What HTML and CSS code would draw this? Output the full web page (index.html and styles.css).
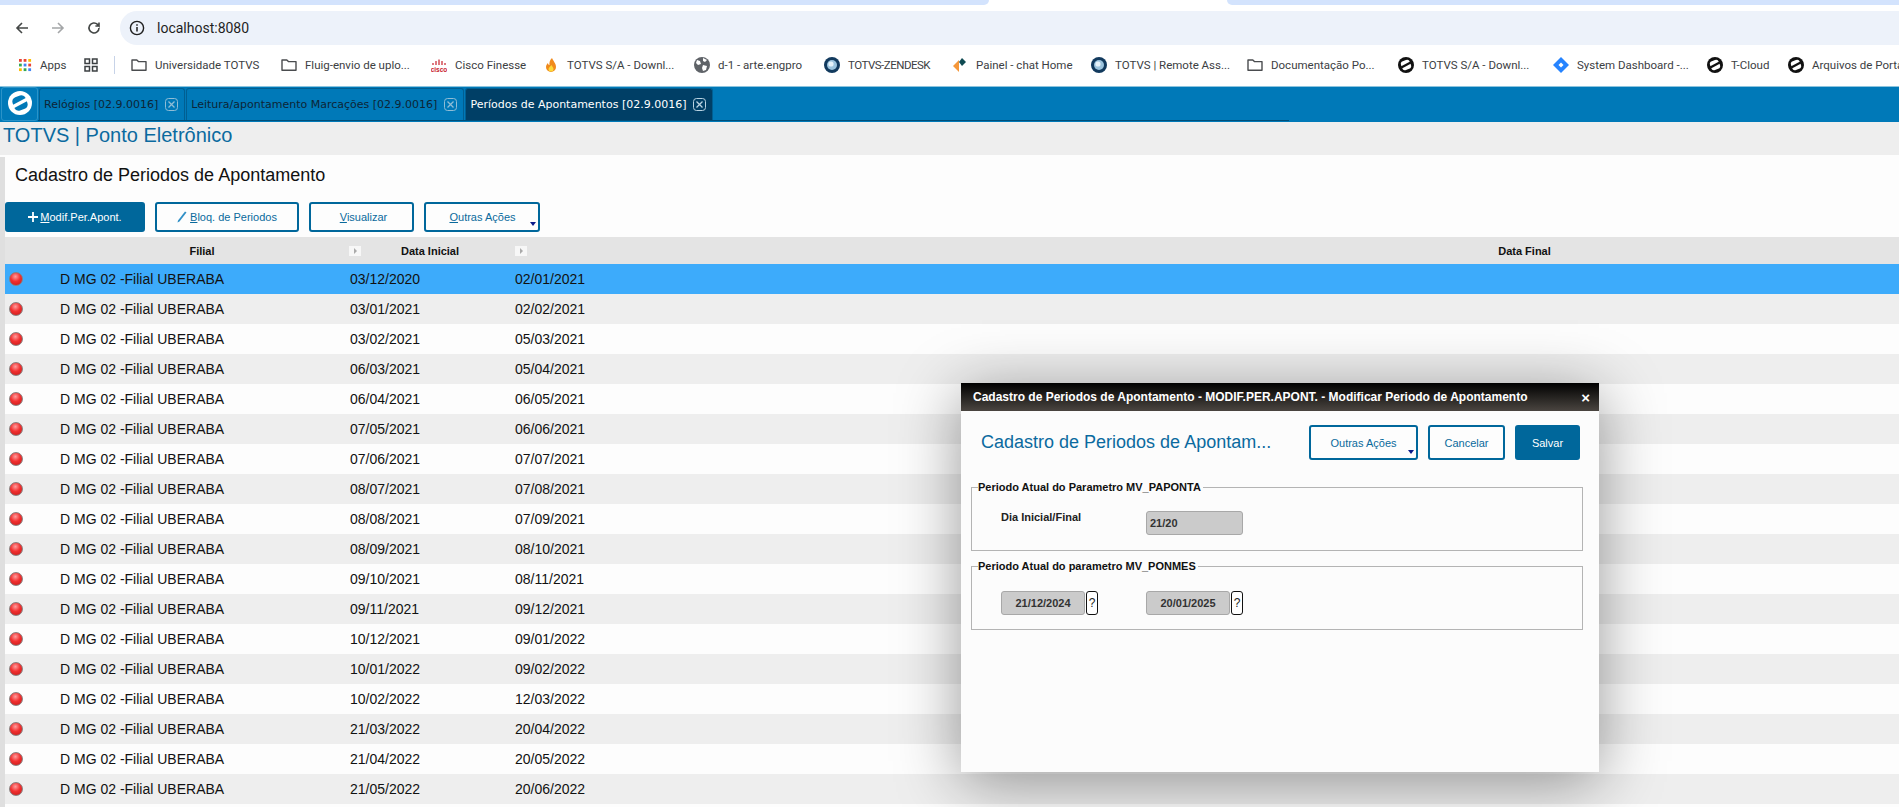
FILE: index.html
```html
<!DOCTYPE html>
<html lang="pt-BR">

<head>
  <meta name="viewport" content="width=device-width, initial-scale=1">
  <meta charset="UTF-8">
  <title>TOTVS | Ponto Eletrônico</title>
  <link rel="stylesheet" href="styles.css">
</head>

<body>
  <svg class="icon-defs" width="0" height="0">
    <symbol id="i-folder" viewBox="0 0 16 16">
      <path d="M1 3h4.800l1.600 1.600H15v8.700H1z" fill="none" stroke="#4a4c4f" stroke-width="1.400" stroke-linejoin="round" />
    </symbol>
    <symbol id="i-logo" viewBox="0 0 24 24">
      <circle cx="12" cy="12" r="12" fill="currentColor" />
      <rect x="5" y="5" width="14" height="14" rx="4.500" fill="var(--logo-bg)" transform="rotate(-20 12 12)" />
      <path d="M5 15.800L19 8.200" stroke="currentColor" stroke-width="3.400" />
    </symbol>
    <symbol id="i-blue-globe" viewBox="0 0 16 16">
      <circle cx="8" cy="8" r="8" fill="#123a5e" />
      <circle cx="8" cy="8" r="5" fill="#9cc4de" />
      <circle cx="7" cy="7" r="2.600" fill="#e6f2fa" />
    </symbol>
    <symbol id="i-tab-close" viewBox="0 0 13 13">
      <rect x="0.500" y="0.500" width="12" height="12" rx="3" fill="none" stroke="currentColor" />
      <path d="M3.500 3.500l6 6M9.500 3.500l-6 6" stroke="currentColor" stroke-width="1.300" />
    </symbol>
  </svg>

  <div class="window-strip">
    <div class="strip-left"></div>
    <div class="strip-tab"></div>
    <div class="strip-right"></div>
  </div>

  <div class="toolbar">
    <div class="nav-btns">
      <svg class="nav-icon" viewBox="0 0 16 16"><path d="M14 8H3M8 3L3 8l5 5" fill="none" stroke="#444746" stroke-width="1.600" /></svg>
      <svg class="nav-icon" viewBox="0 0 16 16"><path d="M2 8h11M8 3l5 5-5 5" fill="none" stroke="#a4a6a8" stroke-width="1.600" /></svg>
      <svg class="nav-icon" viewBox="0 0 16 16"><path d="M13 8a5 5 0 1 1-1.500-3.600L13 6V2.400M13 6H9.400" fill="none" stroke="#444746" stroke-width="1.600" /></svg>
    </div>
    <div class="address-bar">
      <svg class="info-icon" viewBox="0 0 16 16">
        <circle cx="8" cy="8" r="6.600" fill="none" stroke="#1f1f1f" stroke-width="1.400" />
        <path d="M8 7v4.400M8 4.300v1.500" stroke="#1f1f1f" stroke-width="1.500" />
      </svg>
      <span class="address-text">localhost:8080</span>
    </div>
  </div>

  <div class="bookmarks">
    <div class="bm bm-apps">
      <svg class="bm-icon" viewBox="0 0 14 14">
        <rect x="0" y="0" width="3" height="3" fill="#ea4335" /><rect x="5" y="0" width="3" height="3" fill="#ea4335" /><rect x="10" y="0" width="3" height="3" fill="#fbbc04" />
        <rect x="0" y="5" width="3" height="3" fill="#34a853" /><rect x="5" y="5" width="3" height="3" fill="#4285f4" /><rect x="10" y="5" width="3" height="3" fill="#ea4335" />
        <rect x="0" y="10" width="3" height="3" fill="#fbbc04" /><rect x="5" y="10" width="3" height="3" fill="#34a853" /><rect x="10" y="10" width="3" height="3" fill="#4285f4" />
      </svg>
      <span>Apps</span>
    </div>
    <svg class="bm-grid" viewBox="0 0 14 14">
      <path d="M1 1h4.500v4.500H1zM8.500 1H13v4.500H8.500zM1 8.500h4.500V13H1zM8.500 8.500H13V13H8.500z" fill="none" stroke="#3c4043" stroke-width="1.500" />
    </svg>
    <div class="bm-sep"></div>
    <div class="bm"><svg class="bm-icon"><use href="#i-folder" /></svg><span>Universidade TOTVS</span></div>
    <div class="bm"><svg class="bm-icon"><use href="#i-folder" /></svg><span>Fluig-envio de uplo...</span></div>
    <div class="bm">
      <svg class="bm-icon" viewBox="0 0 16 16">
        <path d="M2 6v2M5 4v4M8 2.500v5.500M11 4v4M14 6v2" stroke="#c8202c" stroke-width="1.200" />
        <text x="8" y="14.500" font-size="6.500" font-weight="700" text-anchor="middle" fill="#c8202c" font-family="Liberation Sans, sans-serif">cisco</text>
      </svg>
      <span>Cisco Finesse</span>
    </div>
    <div class="bm">
      <svg class="bm-icon" viewBox="0 0 16 16">
        <path d="M9 1c1 3 4 5 4 9a5 5 0 0 1-10 0c0-2 1-3 2-4 0 1 .5 2 1.500 2C6 5.500 7 3 9 1z" fill="#f08a1c" />
        <path d="M8.500 8c.5 1.500 2 2.500 2 4a2.500 2.500 0 0 1-5 0c0-1.500 2-2.500 3-4z" fill="#fcd93a" />
      </svg>
      <span>TOTVS S/A - Downl...</span>
    </div>
    <div class="bm">
      <svg class="bm-icon" viewBox="0 0 16 16">
        <circle cx="8" cy="8" r="8" fill="#5f6368" />
        <path d="M3 3l3 1 1 3-3 1-2-2zM9 8l4 1-1 4-3 1-1-3zM9 1l4 2-2 2-2-1z" fill="#fff" />
      </svg>
      <span>d-1 - arte.engpro</span>
    </div>
    <div class="bm"><svg class="bm-icon"><use href="#i-blue-globe" /></svg><span class="bm-tight">TOTVS-ZENDESK</span></div>
    <div class="bm">
      <svg class="bm-icon" viewBox="0 0 16 16">
        <path d="M7 3L1 9l6 6z" fill="#f5973a" />
        <path d="M10 1l-3 4 3 4 4-4z" fill="#0f4a52" />
      </svg>
      <span>Painel - chat Home</span>
    </div>
    <div class="bm"><svg class="bm-icon"><use href="#i-blue-globe" /></svg><span>TOTVS | Remote Ass...</span></div>
    <div class="bm"><svg class="bm-icon"><use href="#i-folder" /></svg><span>Documentação Po...</span></div>
    <div class="bm"><svg class="bm-icon bm-logo"><use href="#i-logo" /></svg><span>TOTVS S/A - Downl...</span></div>
    <div class="bm">
      <svg class="bm-icon" viewBox="0 0 16 16">
        <path d="M8 0l8 8-8 8-8-8z" fill="#2684ff" />
        <path d="M8 5.500L10.500 8 8 10.500 5.500 8z" fill="#fff" />
      </svg>
      <span>System Dashboard -...</span>
    </div>
    <div class="bm"><svg class="bm-icon bm-logo"><use href="#i-logo" /></svg><span>T-Cloud</span></div>
    <div class="bm"><svg class="bm-icon bm-logo"><use href="#i-logo" /></svg><span>Arquivos de Portal</span></div>
  </div>

  <div class="tabbar">
    <div class="tab-logo"><svg class="tab-logo-icon"><use href="#i-logo" /></svg></div>
    <div class="tabs">
      <div class="tab">Relógios [02.9.0016]<svg class="tab-x"><use href="#i-tab-close" /></svg></div>
      <div class="tab">Leitura/apontamento Marcações [02.9.0016]<svg class="tab-x"><use href="#i-tab-close" /></svg></div>
      <div class="tab tab-active">Períodos de Apontamentos [02.9.0016]<svg class="tab-x"><use href="#i-tab-close" /></svg></div>
    </div>
  </div>

  <div class="app-title">TOTVS | Ponto Eletrônico</div>

  <div class="main">
    <div class="side-strip"></div>
    <div class="content">
      <h1 class="page-title">Cadastro de Periodos de Apontamento</h1>

      <div class="actions">
        <button class="btn btn-primary btn-modif">
          <svg class="btn-plus" viewBox="0 0 10 10"><path d="M5 0v10M0 5h10" stroke="#fff" stroke-width="1.800" /></svg>
          <span><u>M</u>odif.Per.Apont.</span>
        </button>
        <button class="btn btn-bloq">
          <svg class="btn-pencil" viewBox="0 0 10 12"><path d="M9.500 1.500L2.500 10.500 .5 11.500 1 9.500 8 .5z" fill="#2f8fc6" /></svg>
          <span><u>B</u>loq. de Periodos</span>
        </button>
        <button class="btn btn-view"><span><u>V</u>isualizar</span></button>
        <button class="btn btn-more"><span><u>O</u>utras Ações</span><i class="caret"></i></button>
      </div>

      <div class="grid">
        <div class="grid-head">
          <div class="cell-status"></div>
          <div class="head-cell head-filial">Filial</div>
          <div class="head-cell head-inicial"><i class="sort"></i>Data Inicial</div>
          <div class="head-cell head-final"><i class="sort"></i>Data Final</div>
        </div>
        <div class="row row-selected"><i class="ball"></i><span class="cell-filial">D MG 02 -Filial UBERABA</span><span class="cell-date">03/12/2020</span><span class="cell-date">02/01/2021</span></div>
        <div class="row"><i class="ball"></i><span class="cell-filial">D MG 02 -Filial UBERABA</span><span class="cell-date">03/01/2021</span><span class="cell-date">02/02/2021</span></div>
        <div class="row"><i class="ball"></i><span class="cell-filial">D MG 02 -Filial UBERABA</span><span class="cell-date">03/02/2021</span><span class="cell-date">05/03/2021</span></div>
        <div class="row"><i class="ball"></i><span class="cell-filial">D MG 02 -Filial UBERABA</span><span class="cell-date">06/03/2021</span><span class="cell-date">05/04/2021</span></div>
        <div class="row"><i class="ball"></i><span class="cell-filial">D MG 02 -Filial UBERABA</span><span class="cell-date">06/04/2021</span><span class="cell-date">06/05/2021</span></div>
        <div class="row"><i class="ball"></i><span class="cell-filial">D MG 02 -Filial UBERABA</span><span class="cell-date">07/05/2021</span><span class="cell-date">06/06/2021</span></div>
        <div class="row"><i class="ball"></i><span class="cell-filial">D MG 02 -Filial UBERABA</span><span class="cell-date">07/06/2021</span><span class="cell-date">07/07/2021</span></div>
        <div class="row"><i class="ball"></i><span class="cell-filial">D MG 02 -Filial UBERABA</span><span class="cell-date">08/07/2021</span><span class="cell-date">07/08/2021</span></div>
        <div class="row"><i class="ball"></i><span class="cell-filial">D MG 02 -Filial UBERABA</span><span class="cell-date">08/08/2021</span><span class="cell-date">07/09/2021</span></div>
        <div class="row"><i class="ball"></i><span class="cell-filial">D MG 02 -Filial UBERABA</span><span class="cell-date">08/09/2021</span><span class="cell-date">08/10/2021</span></div>
        <div class="row"><i class="ball"></i><span class="cell-filial">D MG 02 -Filial UBERABA</span><span class="cell-date">09/10/2021</span><span class="cell-date">08/11/2021</span></div>
        <div class="row"><i class="ball"></i><span class="cell-filial">D MG 02 -Filial UBERABA</span><span class="cell-date">09/11/2021</span><span class="cell-date">09/12/2021</span></div>
        <div class="row"><i class="ball"></i><span class="cell-filial">D MG 02 -Filial UBERABA</span><span class="cell-date">10/12/2021</span><span class="cell-date">09/01/2022</span></div>
        <div class="row"><i class="ball"></i><span class="cell-filial">D MG 02 -Filial UBERABA</span><span class="cell-date">10/01/2022</span><span class="cell-date">09/02/2022</span></div>
        <div class="row"><i class="ball"></i><span class="cell-filial">D MG 02 -Filial UBERABA</span><span class="cell-date">10/02/2022</span><span class="cell-date">12/03/2022</span></div>
        <div class="row"><i class="ball"></i><span class="cell-filial">D MG 02 -Filial UBERABA</span><span class="cell-date">21/03/2022</span><span class="cell-date">20/04/2022</span></div>
        <div class="row"><i class="ball"></i><span class="cell-filial">D MG 02 -Filial UBERABA</span><span class="cell-date">21/04/2022</span><span class="cell-date">20/05/2022</span></div>
        <div class="row"><i class="ball"></i><span class="cell-filial">D MG 02 -Filial UBERABA</span><span class="cell-date">21/05/2022</span><span class="cell-date">20/06/2022</span></div>
      </div>
    </div>
  </div>

  <div class="dialog">
    <div class="dialog-head">
      <span>Cadastro de Periodos de Apontamento - MODIF.PER.APONT. - Modificar Periodo de Apontamento</span>
      <span class="dialog-close">×</span>
    </div>
    <div class="dialog-top">
      <div class="dialog-title">Cadastro de Periodos de Apontam...</div>
      <div class="dialog-btns">
        <button class="btn btn-tall btn-d-more"><span>Outras Ações</span><i class="caret"></i></button>
        <button class="btn btn-tall btn-d-cancel"><span>Cancelar</span></button>
        <button class="btn btn-tall btn-primary btn-d-save"><span>Salvar</span></button>
      </div>
    </div>

    <fieldset class="group">
      <legend>Periodo Atual do Parametro MV_PAPONTA</legend>
      <div class="group-row">
        <label class="field-label">Dia Inicial/Final</label>
        <div class="field field-wide">21/20</div>
      </div>
    </fieldset>

    <fieldset class="group">
      <legend>Periodo Atual do parametro MV_PONMES</legend>
      <div class="group-row group-row-dates">
        <div class="date-field"><div class="field field-date">21/12/2024</div><button class="help-btn">?</button></div>
        <div class="date-field"><div class="field field-date">20/01/2025</div><button class="help-btn">?</button></div>
      </div>
    </fieldset>
  </div>
</body>

</html>
```

FILE: styles.css
```css
html,
body {
  margin: 0;
  padding: 0;
  height: 807px;
  overflow: hidden;
  background-color: #fff;
  font-family: "Liberation Sans", Arial, sans-serif;
}

.icon-defs {
  position: absolute;
}

/* browser chrome */
.window-strip {
  display: flex;
  height: 5px;
}

.strip-left {
  width: 989px;
  background-color: #d3e3fd;
  border-bottom-right-radius: 6px;
}

.strip-tab {
  width: 238px;
}

.strip-right {
  flex: 1;
  background-color: #d3e3fd;
  border-bottom-left-radius: 6px;
}

.toolbar {
  display: flex;
  height: 34px;
  padding-top: 6px;
}

.nav-btns {
  display: flex;
  align-items: center;
  gap: 20px;
  width: 120px;
  padding-left: 14px;
  box-sizing: border-box;
}

.nav-icon {
  width: 16px;
  height: 16px;
}

.address-bar {
  flex: 1;
  display: flex;
  align-items: center;
  background-color: #edf2fa;
  border-radius: 17px 0 0 17px;
  padding-left: 9px;
}

.info-icon {
  width: 16px;
  height: 16px;
}

.address-text {
  margin-left: 12px;
  font-family: Roboto, sans-serif;
  font-size: 14px;
  color: #1f1f1f;
}

.bookmarks {
  display: grid;
  grid-template-columns: 65px 29px 18px 150px 150px 112px 151px 130px 128px 139px 156px 151px 155px 154px 81px 1fr;
  align-items: center;
  height: 40px;
  padding: 0 0 1px 19px;
  white-space: nowrap;
  font-family: Roboto, sans-serif;
  font-size: 11.5px;
  color: #3c4043;
  --logo-bg: #fff;
}

.bm {
  display: flex;
  align-items: center;
  gap: 8px;
}

.bm-tight {
  letter-spacing: -0.5px;
}

.bm-icon {
  width: 16px;
  height: 16px;
  flex: none;
}

.bm-apps .bm-icon {
  width: 13px;
  height: 13px;
}

.bm-grid {
  width: 14px;
  height: 14px;
}

.bm-sep {
  width: 1px;
  height: 18px;
  margin-left: 1px;
  background-color: #c7d3e8;
}

.bm-logo {
  color: #111;
}

/* app tabs */
.tabbar {
  display: flex;
  height: 36px;
  background-color: #0079b8;
  border-top: 1px solid #8cc4de;
  box-sizing: border-box;
}

.tab-logo {
  width: 37px;
  height: 34px;
  margin-left: 1px;
  box-sizing: border-box;
  border: 1px solid #2b93c8;
  border-radius: 3px;
  display: flex;
  align-items: center;
  justify-content: center;
  color: #fff;
  --logo-bg: #0079b8;
}

.tab-logo-icon {
  width: 24px;
  height: 24px;
  margin-bottom: 3px;
}

.tabs {
  display: flex;
  gap: 1px;
  width: 1251px;
  height: 34px;
  padding-left: 1px;
  padding-top: 1px;
  box-sizing: border-box;
  border-bottom: 1px solid #004e78;
}

.tab {
  display: flex;
  align-items: center;
  height: 32px;
  padding: 0 6px 0 4px;
  border: 1px solid #005f92;
  border-bottom: none;
  border-radius: 3px 3px 0 0;
  box-sizing: border-box;
  font-family: "DejaVu Sans", sans-serif;
  font-size: 11px;
  color: #0d2536;
  white-space: nowrap;
}

.tab-active {
  background-color: #003f66;
  color: #fff;
}

.tab-x {
  width: 13px;
  height: 13px;
  margin-left: 7px;
  color: #8fbdd6;
}

.tab-active .tab-x {
  color: #b9d3e2;
}

.app-title {
  height: 33px;
  line-height: 27px;
  padding-left: 3px;
  background-color: #eee;
  font-size: 20px;
  color: #0b6a9f;
}

/* list page */
.main {
  display: flex;
  background-color: #fdfdfd;
}

.side-strip {
  width: 5px;
  height: 650px;
  margin-top: 2px;
  background-color: #dfdfdf;
}

.content {
  flex: 1;
  min-width: 0;
}

.page-title {
  margin: 0;
  height: 47px;
  line-height: 40px;
  padding-left: 10px;
  font-size: 18px;
  font-weight: normal;
  color: #111;
}

.actions {
  display: flex;
  gap: 10px;
  height: 35px;
}

.btn {
  position: relative;
  display: flex;
  align-items: center;
  justify-content: center;
  height: 30px;
  padding: 0;
  background-color: #fdfdfd;
  border: 2px solid #00679b;
  border-radius: 3px;
  box-sizing: border-box;
  font-family: "Liberation Sans", Arial, sans-serif;
  font-size: 11px;
  color: #0a6a9c;
}

.btn-primary {
  background-color: #00679b;
  color: #fff;
}

.btn-modif {
  width: 140px;
  gap: 2px;
}

.btn-plus {
  width: 10px;
  height: 10px;
}

.btn-bloq {
  width: 144px;
  gap: 3px;
}

.btn-pencil {
  width: 10px;
  height: 12px;
}

.btn-view {
  width: 105px;
  padding-left: 4px;
}

.btn-more {
  width: 116px;
  padding-left: 1px;
}

.caret {
  position: absolute;
  right: 2px;
  bottom: 4px;
  border-left: 3.5px solid transparent;
  border-right: 3.5px solid transparent;
  border-top: 4px solid #0a1a8a;
}

.grid-head {
  display: flex;
  height: 27px;
  background-color: #e4e4e4;
  font-size: 11px;
  font-weight: bold;
  color: #111;
}

.cell-status {
  width: 47px;
  flex: none;
}

.head-cell {
  position: relative;
  flex: none;
  text-align: center;
  line-height: 28px;
}

.head-filial {
  width: 297px;
  padding-left: 3px;
  box-sizing: border-box;
}

.head-inicial {
  width: 166px;
  padding-right: 4px;
  box-sizing: border-box;
}

.head-final {
  width: 2019px;
}

.sort {
  position: absolute;
  left: 0;
  top: 9px;
  width: 12px;
  height: 10px;
  background-color: #f7f7f7;
}

.sort::after {
  content: "";
  position: absolute;
  left: 5px;
  top: 2px;
  border-top: 3px solid transparent;
  border-bottom: 3px solid transparent;
  border-left: 3px solid #aaa;
}

.row {
  display: flex;
  align-items: center;
  height: 30px;
  font-size: 14px;
  color: #111;
}

.row:nth-child(odd) {
  background-color: #eee;
}

.row-selected {
  background-color: #3dabfb;
}

.ball {
  width: 14px;
  height: 14px;
  margin-left: 4px;
  flex: none;
  box-sizing: border-box;
  border: 1px solid #8a7f7f;
  border-radius: 50%;
  background: radial-gradient(circle at 45% 30%, #ff9c9c 0, #f23030 45%, #c21818 100%);
}

.cell-filial {
  width: 290px;
  margin-left: 37px;
  flex: none;
}

.cell-date {
  width: 165px;
  flex: none;
}

/* dialog */
.dialog {
  position: absolute;
  left: 961px;
  top: 383px;
  width: 638px;
  height: 389px;
  background-color: #fcfcfc;
  box-shadow: 0 10px 60px rgba(0, 0, 0, 0.4);
}

.dialog-head {
  display: flex;
  align-items: center;
  justify-content: space-between;
  height: 28px;
  padding: 0 9px 0 12px;
  background: linear-gradient(#000, #4a4540);
  font-size: 12px;
  font-weight: bold;
  color: #fff;
}

.dialog-close {
  font-size: 15px;
}

.dialog-top {
  display: flex;
  align-items: center;
  justify-content: space-between;
  height: 35px;
  padding: 14px 19px 0 20px;
}

.dialog-title {
  font-size: 18px;
  color: #0b6a9f;
}

.dialog-btns {
  display: flex;
  gap: 10px;
}

.btn-tall {
  height: 35px;
}

.btn-d-more {
  width: 109px;
}

.btn-d-cancel {
  width: 77px;
}

.btn-d-save {
  width: 65px;
}

/* legend box starts 6px above the drawn border */
.group {
  width: 612px;
  height: 71px;
  margin: 0 0 8px 10px;
  padding: 0 0 0 29px;
  box-sizing: border-box;
  border: 1px solid #b4b4b4;
}

.dialog-top + .group {
  margin-top: 20px;
}

.group legend {
  margin-left: -23px;
  padding: 0 2px 0 0;
  font-size: 11px;
  font-weight: bold;
  line-height: 14px;
  color: #111;
}

.group-row {
  display: flex;
  padding-top: 23px;
}

.field-label {
  width: 145px;
  margin-top: -6px;
  font-size: 11px;
  font-weight: bold;
  color: #222;
}

.field {
  height: 24px;
  line-height: 22px;
  background-color: #cbcbcb;
  border: 1px solid #a8a8a8;
  border-radius: 3px;
  box-sizing: border-box;
  font-size: 11px;
  font-weight: bold;
  color: #333;
}

.field-wide {
  width: 97px;
  padding-left: 3px;
  margin-top: -6px;
}

.group-row-dates {
  gap: 48px;
  padding-top: 18px;
}

.date-field {
  display: flex;
  gap: 1px;
}

.field-date {
  width: 84px;
  text-align: center;
}

.help-btn {
  width: 12px;
  height: 24px;
  padding: 0;
  background-color: #fff;
  border: 1px solid #111;
  border-radius: 3px;
  font-family: "Liberation Sans", Arial, sans-serif;
  font-size: 12px;
  color: #222;
}
```
